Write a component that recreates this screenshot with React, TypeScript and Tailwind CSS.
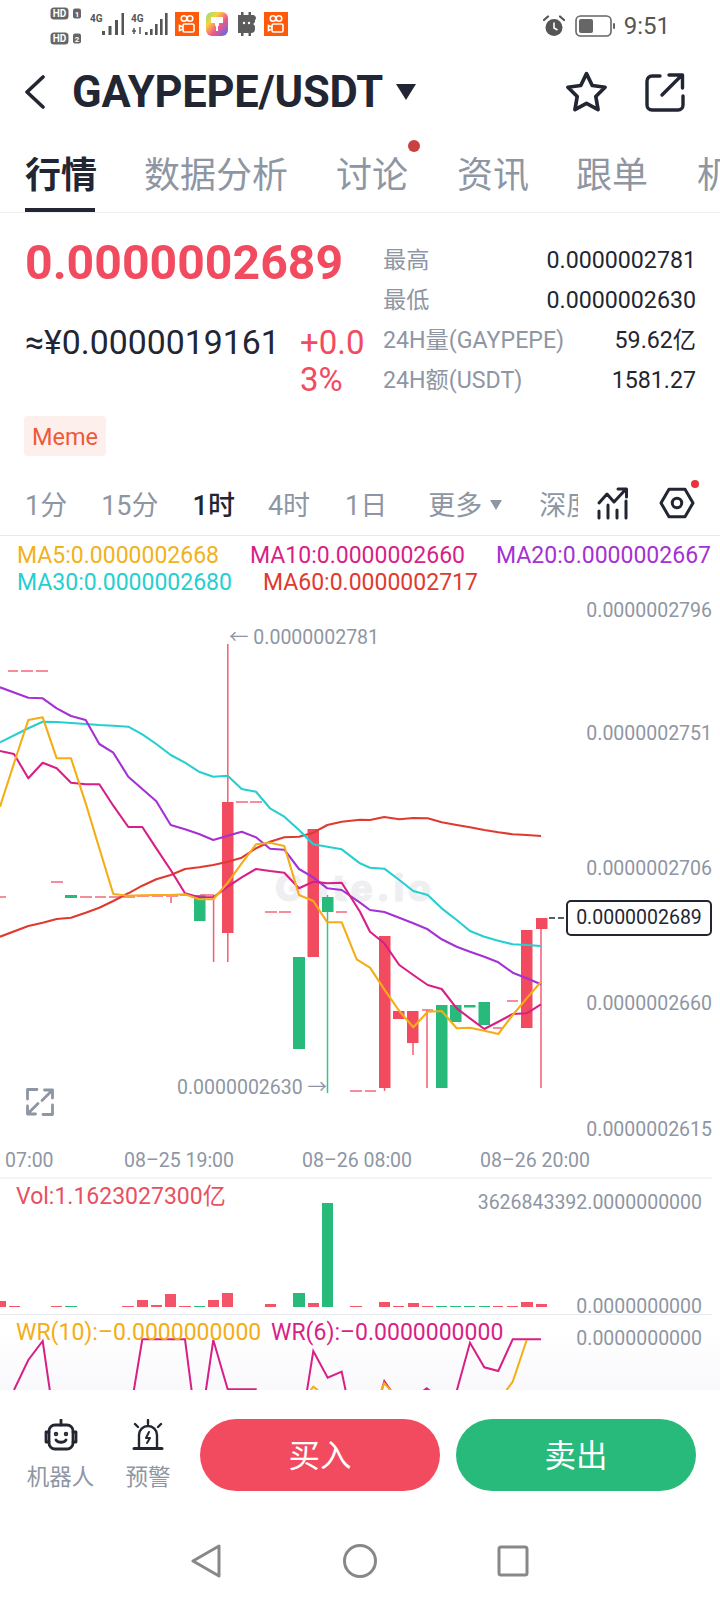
import React from "react";

const zx = (x0: number, y0: number, pts: number[][]) => pts.map(([x, y]) => [x0 + x / 3, y0 + y / 3]);
const toP = (p: number[][]) => p.map(([x, y]) => `${x.toFixed(1)},${y.toFixed(1)}`).join(" ");

const MA20 = [...zx(0, 600, [[0,262],[85,293],[128,295],[170,325],[213,348],[257,360],[298,432],[340,458],[385,530],[427,567],[469,604],[512,675],[555,688],[597,702],[640,720],[683,707],[725,695],[768,712],[810,746],[853,749],[897,807],[940,832],[982,865],[1025,870],[1080,908]]), ...zx(360, 900, [[30,30],[73,36],[118,53],[160,70],[203,88],[245,118],[290,140],[330,155],[373,170],[415,187],[458,218],[500,235],[543,253]])];
const MA30 = [...zx(0, 600, [[0,427],[85,385],[128,365],[170,366],[213,369],[257,372],[298,375],[340,377],[385,380],[427,403],[469,432],[512,465],[555,488],[597,515],[640,530],[683,527],[725,567],[768,575],[810,625],[853,650],[897,690],[940,733],[982,740],[1025,748],[1080,790]]), ...zx(360, 600, [[30,803],[73,806],[118,840],[160,873],[203,885],[245,925],[290,960],[330,993]]), ...zx(360, 900, [[373,110],[415,122],[458,133],[500,135],[543,138]])];
const MA10 = [...zx(0, 600, [[0,453],[42,462],[85,535],[128,488],[170,505],[213,548],[257,553],[298,553],[340,617],[385,681],[427,681],[469,745],[512,810],[555,880],[597,892],[640,892],[683,860],[725,832],[768,807],[810,813],[853,818],[897,865],[940,845],[982,850],[1025,848],[1080,935]]), ...zx(360, 900, [[30,95],[73,130],[118,195],[160,225],[203,255],[245,267],[290,325],[330,355],[373,387],[415,365],[458,342],[500,340],[543,313]])];
const MA5 = [...zx(0, 600, [[0,620],[42,490],[85,360],[128,352],[170,475],[213,475],[257,610],[298,745],[340,882],[385,887],[427,886],[469,885],[512,885],[555,883],[597,898],[640,898],[683,848],[725,790],[768,733],[810,728],[853,738],[897,885],[940,903],[982,967],[1025,967],[1070,1078]]), ...zx(360, 900, [[30,203],[73,268],[118,333],[160,382],[203,335],[245,333],[290,385],[330,383],[373,392],[415,402],[458,345],[500,295],[543,245]])];
const MA60 = [...zx(0, 600, [[0,1010],[85,978],[128,968],[170,957],[213,953],[257,938],[298,923],[340,903],[385,880],[427,857],[469,838],[512,825],[555,807],[597,802],[640,795],[683,785],[725,773],[768,745],[810,725],[853,712],[897,710],[940,698],[982,675],[1025,665],[1080,659]]), ...zx(360, 600, [[30,660],[73,651],[118,658],[160,654],[203,655],[245,667],[290,675],[330,682],[373,690],[415,697],[458,703],[500,705],[543,708]])];

const WR6 = [
  zx(0, 1170, [[42,660],[85,570],[128,513],[155,700]]),
  zx(0, 1170, [[395,700],[427,508],[555,508],[580,700]]),
  zx(0, 1170, [[612,700],[640,510],[683,658],[770,658]]),
  zx(0, 1170, [[915,700],[940,543],[983,623],[1025,605],[1045,700]]),
  zx(360, 1170, [[60,680],[73,633],[105,680]]),
  zx(360, 1170, [[180,670],[200,655],[220,670]]),
  zx(360, 1170, [[280,700],[330,518],[373,592],[415,603],[458,508],[543,508]]),
];
const WR10 = [
  zx(0, 1170, [[925,670],[940,650],[965,670]]),
  zx(360, 1170, [[60,670],[73,640],[100,670]]),
  zx(360, 1170, [[425,680],[458,635],[500,510]]),
];

const RED = "#f24b60";
const GREEN = "#27ba7b";
const bodies: [number, number, number, number, string][] = [
  [65, 12, 895, 898, GREEN], [194, 11.5, 895, 921, GREEN], [222, 11.5, 802, 933, RED], [293, 12, 957, 1049, GREEN],
  [307.5, 11.5, 829, 957, RED], [322, 11.5, 897, 912, GREEN], [379, 11.5, 936, 1088, RED], [393, 11.5, 1011, 1019, RED],
  [407, 11.5, 1011, 1043, RED], [436, 11.5, 1005, 1088, GREEN], [450, 11.5, 1005, 1022, GREEN], [464, 11.5, 1005, 1007.5, GREEN],
  [478.5, 11.5, 1002, 1025, GREEN], [521, 11.5, 930, 1028, RED], [536, 11.5, 918, 929, RED],
];
const wicks: [number, number, number, string][] = [
  [213.6, 895, 962, RED], [227.8, 644, 962, RED], [327.5, 895, 1093, GREEN], [384.5, 1088, 1091, RED], [413, 1043, 1055, RED],
  [427, 1010, 1088, RED], [541, 929, 1088, RED], [171, 897, 903, RED],
];
const dashes: [number, number, number, string][] = [
  [8, 18, 671, RED], [21, 33, 671, RED], [36, 48, 671, RED], [51, 63, 882, RED], [0, 6, 897, RED], [80, 92, 897, RED], [95, 106, 897, RED],
  [109, 120, 897, RED], [123, 135, 897, RED], [137, 149, 896, RED], [152, 163, 896, RED], [166, 178, 896, RED], [180, 191, 895, RED],
  [200, 214, 895, RED], [236, 248, 802, RED], [250, 262, 802, RED], [265, 277, 912, RED], [279, 291, 912, RED], [336, 347, 912, RED],
  [350, 362, 1091, RED], [365, 376, 1091, RED], [422, 433, 1010, RED], [493, 503, 1028, RED], [507, 518, 1001, RED],
];
const vols: [number, number, number, string][] = [
  [0, 6, 1301, RED], [9, 11, 1306, RED], [51, 11, 1306, RED], [65, 12, 1306, GREEN], [122, 12, 1306, RED], [137, 11, 1300, RED],
  [151, 11, 1305, RED], [165, 11, 1294, RED], [179, 12, 1306, RED], [194, 11, 1306, GREEN], [208, 11, 1300, RED], [222, 11, 1293, RED],
  [265, 11, 1304, RED], [293, 12, 1293, GREEN], [308, 11, 1303, RED], [322, 11, 1203, GREEN], [350, 12, 1306, RED], [379, 11, 1302, RED],
  [393, 11, 1306, RED], [408, 11, 1303, RED], [422, 11, 1306, RED], [436, 11, 1306, GREEN], [450, 11, 1306, GREEN], [464, 11, 1306, GREEN],
  [479, 11, 1306, GREEN], [493, 10, 1306, RED], [507, 11, 1306, RED], [521, 12, 1302, RED], [536, 11, 1304, RED],
];

function ChartDrawing() {
  return (
    <svg className="absolute inset-0 w-[720px] h-[854px]" viewBox="0 536 720 854" fill="none">
      <text x="275" y="901" fontFamily="Inter, sans-serif" fontWeight="800" fontSize="37" letterSpacing="4" fill="#efeff1" stroke="#efeff1" strokeWidth="1">Gate.io</text>
      <line x1="0" y1="1178" x2="712" y2="1178" stroke="#e8e9ee" strokeWidth="1" />
      <line x1="0" y1="1314.5" x2="712" y2="1314.5" stroke="#e8e9ee" strokeWidth="1" />
      {dashes.map(([a, b, y, c], i) => <line key={i} x1={a} x2={b} y1={y} y2={y} stroke={c} strokeWidth="1.5" opacity="0.85" />)}
      {wicks.map(([x, a, b, c], i) => <line key={i} x1={x} x2={x} y1={a} y2={b} stroke={c} strokeWidth="1.5" opacity="0.9" />)}
      {bodies.map(([x, w, a, b, c], i) => <rect key={i} x={x} y={a} width={w} height={b - a} fill={c} />)}
      {[[MA60, "#e03a30"], [MA30, "#25cfd0"], [MA20, "#a531d4"], [MA10, "#d81f87"], [MA5, "#f5ad16"]].map(([p, c], i) => (
        <polyline key={i} points={toP(p as number[][])} stroke={c as string} strokeWidth="2.1" strokeLinejoin="round" />
      ))}
      {vols.map(([x, w, y, c], i) => <rect key={i} x={x} y={y} width={w} height={1307 - y} fill={c} opacity={c === RED ? 0.95 : 1} />)}
      {WR6.map((p, i) => <polyline key={i} points={toP(p)} stroke="#d81f87" strokeWidth="2" />)}
      {WR10.map((p, i) => <polyline key={i} points={toP(p)} stroke="#f5ad16" strokeWidth="2" />)}
      <line x1="549" x2="555" y1="918" y2="918" stroke="#222633" strokeWidth="1.5" />
      <line x1="558" x2="564" y1="918" y2="918" stroke="#222633" strokeWidth="1.5" />
      <g stroke="#8e96a3" strokeWidth="2.8" strokeLinecap="round" strokeLinejoin="round">
        <path d="M27.5 1099V1089.5H37" />
        <path d="M52.5 1105V1114.5H43" />
        <path d="M42 1100.5L52.5 1090M44.5 1090H52.5V1098" />
        <path d="M38 1103.5L27.5 1114M35.5 1114H27.5V1106" />
      </g>
    </svg>
  );
}

function HD({ n }: { n: string }) {
  return (
    <svg width="32" height="13" viewBox="0 0 32 13">
      <rect x="0.5" y="0.5" width="18" height="12" rx="3.5" fill="#666" />
      <text x="9.5" y="10" textAnchor="middle" fontFamily="Roboto, sans-serif" fontWeight="700" fontSize="10" fill="#fff">HD</text>
      <rect x="23" y="1.5" width="8" height="10" rx="2" fill="#666" />
      <text x="27" y="10" textAnchor="middle" fontFamily="Roboto, sans-serif" fontWeight="700" fontSize="8" fill="#fff">{n}</text>
    </svg>
  );
}

function Signal({ w, second }: { w: number; second?: boolean }) {
  const heights = second ? [3, 6, 11, 16, 22] : [4, 9, 15, 22];
  const x0 = second ? 14 : 12;
  const step = second ? 5 : 6.5;
  return (
    <svg width={w} height="24" viewBox={`0 0 ${w} 24`}>
      <text x="0" y="10" fontFamily="Roboto, sans-serif" fontWeight="700" fontSize="10" fill="#555">4G</text>
      {second && <path d="M3 16v6M1 19h4M9 15v7" stroke="#555" strokeWidth="1.5" />}
      {heights.map((h, i) => <rect key={i} x={x0 + i * step} y={23 - h} width={second ? 2.6 : 3} height={h} fill="#555" />)}
    </svg>
  );
}

function Kuaishou() {
  return (
    <svg width="24" height="24" viewBox="0 0 24 24">
      <rect width="24" height="24" fill="#ff5a0a" />
      <g fill="none" stroke="#fff" strokeWidth="1.6">
        <circle cx="9" cy="6.5" r="2.8" />
        <circle cx="15" cy="6.5" r="2.8" />
        <rect x="8" y="12" width="11" height="8" rx="1.5" />
        <path d="M8 15l-3.5-1.5v5L8 17" />
      </g>
    </svg>
  );
}

function Brush() {
  return (
    <svg width="22" height="24" viewBox="0 0 22 24">
      <defs>
        <linearGradient id="brushg" x1="0" y1="0" x2="1" y2="1">
          <stop offset="0" stopColor="#7fe08a" />
          <stop offset="0.3" stopColor="#f9d23c" />
          <stop offset="0.6" stopColor="#f0578a" />
          <stop offset="1" stopColor="#4b6cf6" />
        </linearGradient>
      </defs>
      <rect width="22" height="24" rx="6" fill="url(#brushg)" />
      <path d="M5 5h12v6h-4v3h-1v5h-2v-5H9v-3H5z" fill="#fff" />
    </svg>
  );
}

function Chip() {
  return (
    <svg width="22" height="24" viewBox="0 0 22 24">
      <path d="M6 0h2.5v3h5V0H16v3h2a3 3 0 0 1 2 5.2V9c0 1.5-1 2.5-2 3 1 .5 2 1.5 2 3v2a4 4 0 0 1-4 4v3h-2.5v-3h-5v3H6v-3H3V3h3z" fill="#5c5c5c" />
      <circle cx="9" cy="11" r="1.2" fill="#fff" />
      <circle cx="14" cy="11" r="1.2" fill="#fff" />
    </svg>
  );
}

function StatusBar() {
  return (
    <div className="h-[50px] flex items-start">
      <div className="flex flex-col gap-[12px] ml-[50px] mt-[7px] w-[32px]">
        <HD n="1" />
        <HD n="2" />
      </div>
      <div className="flex items-start gap-[7px] ml-[8px] mt-[12px]">
        <Signal w={34} />
        <Signal w={37} second />
        <Kuaishou />
        <Brush />
        <Chip />
        <Kuaishou />
      </div>
      <div className="ml-auto flex items-center mt-[14px] mr-[50px] h-[24px]">
        <svg width="22" height="22" viewBox="0 0 22 22">
          <circle cx="11" cy="12.5" r="8.5" fill="#555" />
          <path d="M11 7.5v5.5l3.5 2" stroke="#fff" strokeWidth="1.6" fill="none" />
          <path d="M1 5l4-3.5M21 5l-4-3.5" stroke="#555" strokeWidth="2.2" strokeLinecap="round" />
        </svg>
        <svg className="ml-[10px]" width="40" height="22" viewBox="0 0 40 22">
          <rect x="1" y="1" width="35" height="20" rx="4.5" fill="none" stroke="#666" strokeWidth="1.6" />
          <rect x="4" y="4" width="14" height="14" rx="2" fill="#666" />
          <rect x="38" y="8" width="2" height="6" rx="1" fill="#666" />
        </svg>
        <span className="ml-[9px] text-[24px] leading-[24px] text-[#555]">9:51</span>
      </div>
    </div>
  );
}

function Header() {
  return (
    <div className="h-[84px] flex items-center text-[#222633]">
      <svg className="ml-[24px]" width="21" height="34" viewBox="0 0 21 34" fill="none">
        <path d="M19 2L3 17l16 15" stroke="#222633" strokeWidth="3.6" strokeLinecap="round" strokeLinejoin="round" />
      </svg>
      <span className="ml-[27px] mt-[2px] text-[43.5px] leading-[50px] font-bold tracking-[-0.2px]">GAYPEPE/USDT</span>
      <svg className="ml-[13px]" width="20" height="16" viewBox="0 0 20 16">
        <path d="M0 0h20L10 16z" fill="#222633" />
      </svg>
      <svg className="ml-auto" width="45" height="44" viewBox="0 0 44 42" fill="none">
        <path d="M22 3l5.6 11.6 12.6 1.8-9.1 9 2.2 12.8L22 32.1l-11.3 6.1 2.2-12.8-9.1-9 12.6-1.8z" stroke="#222633" strokeWidth="3.6" strokeLinejoin="round" />
      </svg>
      <svg className="ml-[36px] mr-[35px]" width="40" height="40" viewBox="0 0 40 40" fill="none" stroke="#222633" strokeWidth="3.4" strokeLinecap="round" strokeLinejoin="round">
        <path d="M15 4H7a5 5 0 0 0-5 5v24a5 5 0 0 0 5 5h26a5 5 0 0 0 5-5v-9" />
        <path d="M17 23L37 3M24 3h13.5v13" />
      </svg>
    </div>
  );
}

function Tabs() {
  return (
    <div className="h-[79px] border-b border-[#eff0f5] flex overflow-hidden text-[36px] leading-[84px] text-[#8e96a3] whitespace-nowrap">
      <div className="ml-[25px] relative font-bold text-[#222633]">
        行情
        <div className="absolute left-0 w-[70px] bottom-0 h-[4px] bg-[#222633]" />
      </div>
      <div className="ml-[47px]">数据分析</div>
      <div className="ml-[48px] relative">
        讨论
        <div className="absolute right-[-12px] top-[6px] w-[12px] h-[12px] rounded-full bg-[#c9403f]" />
      </div>
      <div className="ml-[49px]">资讯</div>
      <div className="ml-[47px]">跟单</div>
      <div className="ml-[49px]">机器人</div>
    </div>
  );
}

const stats = [
  ["最高", "0.0000002781"],
  ["最低", "0.0000002630"],
  ["24H量(GAYPEPE)", "59.62亿"],
  ["24H额(USDT)", "1581.27"],
];

function PriceBlock() {
  return (
    <div className="h-[203px] flex">
      <div className="w-[383px] pl-[25px] pt-[25px] shrink-0">
        <div className="text-[48.2px] leading-[50px] font-bold text-[#f24b60]">0.0000002689</div>
        <div className="mt-[36px] flex">
          <span className="w-[275px] text-[33.8px] leading-[37px] text-[#222633]">≈¥0.0000019161</span>
          <span className="w-[68px] text-[33px] leading-[37px] text-[#f24b60] break-all">+0.03%</span>
        </div>
      </div>
      <div className="w-[313px] pt-[27px]">
        {stats.map(([a, b]) => (
          <div key={a} className="h-[40px] flex items-center justify-between text-[23.2px]">
            <span className="text-[#8e96a3]">{a}</span>
            <span className="text-[#222633]">{b}</span>
          </div>
        ))}
      </div>
    </div>
  );
}

function Intervals() {
  return (
    <div className="mt-[14px] h-[66px] border-b border-[#e8e9ee] flex items-center pl-[25px] text-[27px] text-[#8e96a3] whitespace-nowrap">
      <span className="pt-[8px]">1分</span>
      <span className="pt-[8px] ml-[34px]">15分</span>
      <span className="pt-[8px] ml-[34px] font-medium text-[#222633]">1时</span>
      <span className="pt-[8px] ml-[33px]">4时</span>
      <span className="pt-[8px] ml-[35px]">1日</span>
      <span className="pt-[8px] ml-[41px]">更多</span>
      <svg className="ml-[8px] mt-[4px]" width="12" height="10" viewBox="0 0 12 10"><path d="M0 0h12L6 10z" fill="#8e96a3" /></svg>
      <span className="pt-[8px] ml-[37px] w-[39px] overflow-hidden">深度</span>
      <svg className="ml-[18px]" width="34" height="34" viewBox="0 0 34 34" fill="none" stroke="#222633" strokeWidth="3" strokeLinecap="round" strokeLinejoin="round">
        <path d="M3 17l8-9 7 8L30 3M22 3h8.5v8" />
        <path d="M3 25v7M12 19v13M21 24v8M30 15v17" />
      </svg>
      <div className="relative ml-[29px]">
        <svg width="36" height="32" viewBox="0 0 38 34" fill="none" stroke="#222633" strokeWidth="3.2" strokeLinejoin="round">
          <path d="M10.5 2.5h17L36 17l-8.5 14.5h-17L2 17z" />
          <circle cx="19" cy="17" r="5" />
        </svg>
        <div className="absolute right-[-4px] top-[-7px] w-[8px] h-[8px] rounded-full bg-[#e8343a]" />
      </div>
    </div>
  );
}

function Chart() {
  const axis = "absolute text-[19.5px] leading-[26px] text-[#8e96a3] whitespace-nowrap";
  return (
    <div className="relative h-[854px] overflow-hidden">
      <div className="absolute left-0 right-0 bottom-0 h-[60px] bg-linear-to-b from-white to-[#f9f9fc]" />
      <ChartDrawing />
      <div className="relative pl-[17px] pt-[6px] text-[23px] leading-[27px] whitespace-nowrap">
        <div className="flex gap-x-[31px]">
          <span className="text-[#f2b21c]">MA5:0.0000002668</span>
          <span className="text-[#d81f87]">MA10:0.0000002660</span>
          <span className="text-[#a531d4]">MA20:0.0000002667</span>
        </div>
        <div className="flex gap-x-[31px]">
          <span className="text-[#25cfd0]">MA30:0.0000002680</span>
          <span className="text-[#e03a30]">MA60:0.0000002717</span>
        </div>
      </div>
      <span className={`${axis} right-[8px] top-[62px]`}>0.0000002796</span>
      <span className={`${axis} right-[8px] top-[185px]`}>0.0000002751</span>
      <span className={`${axis} right-[8px] top-[320px]`}>0.0000002706</span>
      <span className={`${axis} right-[8px] top-[455px]`}>0.0000002660</span>
      <span className={`${axis} right-[8px] top-[581px]`}>0.0000002615</span>
      <span className={`${axis} left-[229px] top-[89px]`}>← 0.0000002781</span>
      <span className={`${axis} left-[177px] top-[539px]`}>0.0000002630 →</span>
      <span className={`${axis} left-[5px] top-[612px]`}>07:00</span>
      <span className={`${axis} left-[124px] top-[612px]`}>08–25 19:00</span>
      <span className={`${axis} left-[302px] top-[612px]`}>08–26 08:00</span>
      <span className={`${axis} left-[480px] top-[612px]`}>08–26 20:00</span>
      <div className="absolute left-[566px] top-[364px] w-[146px] h-[36px] border-2 border-[#222633] rounded-[5px] bg-white flex items-center justify-center text-[19.5px] text-[#222633]">
        0.0000002689
      </div>
      <span className="absolute left-[16px] top-[648px] text-[23px] leading-[26px] text-[#e8515f]">Vol:1.1623027300亿</span>
      <span className={`${axis} right-[18px] top-[654px]`}>3626843392.0000000000</span>
      <span className={`${axis} right-[18px] top-[758px]`}>0.0000000000</span>
      <span className="absolute left-[16px] top-[784px] text-[23px] leading-[26px] text-[#f5ad16] whitespace-nowrap">WR(10):–0.0000000000</span>
      <span className="absolute left-[271px] top-[784px] text-[23px] leading-[26px] text-[#d81f87] whitespace-nowrap">WR(6):–0.0000000000</span>
      <span className={`${axis} right-[18px] top-[790px]`}>0.0000000000</span>
    </div>
  );
}

function BottomBar() {
  const label = "text-[22.5px] leading-[30px] text-[#8e96a3] whitespace-nowrap";
  return (
    <div className="h-[210px] bg-white">
      <div className="pt-[29px] flex pl-[27px]">
        <div className="flex flex-col items-center w-[67px]">
          <svg width="34" height="32" viewBox="0 0 34 32" fill="none" stroke="#222633" strokeWidth="2.8" strokeLinejoin="round" strokeLinecap="round">
            <path d="M17 1v5" />
            <rect x="5" y="6" width="24" height="24" rx="6" />
            <path d="M5 13H2v10h3M29 13h3v10h-3" />
            <path d="M12 21c2 3 8 3 10 0" />
            <circle cx="12" cy="15" r="0.8" fill="#222633" />
            <circle cx="22" cy="15" r="0.8" fill="#222633" />
          </svg>
          <span className={`${label} mt-[11px]`}>机器人</span>
        </div>
        <div className="flex flex-col items-center w-[46px] ml-[31px]">
          <svg width="32" height="32" viewBox="0 0 32 32" fill="none" stroke="#222633" strokeWidth="2.4" strokeLinecap="round" strokeLinejoin="round">
            <path d="M16 1v4M3 5l3 3M29 5l-3 3" />
            <path d="M7 28V16a9 9 0 0 1 18 0v12" />
            <path d="M2 29.5h28" strokeWidth="3" />
            <path d="M17 13l-3 6h4l-3 5" strokeWidth="2" />
          </svg>
          <span className={`${label} mt-[11px]`}>预警</span>
        </div>
        <div className="ml-[29px] w-[240px] h-[72px] pt-[3px] rounded-full bg-[#f24b60] flex items-center justify-center text-[31.5px] text-white">买入</div>
        <div className="ml-[16px] w-[240px] h-[72px] pt-[3px] rounded-full bg-[#27ba7b] flex items-center justify-center text-[31.5px] text-white">卖出</div>
      </div>
      <div className="mt-[52px] flex items-center pl-[191px]">
        <svg width="30" height="34" viewBox="0 0 30 34" fill="none" stroke="#888" strokeWidth="3" strokeLinejoin="round">
          <path d="M28 2v30L2 17z" />
        </svg>
        <svg className="ml-[122px]" width="34" height="34" viewBox="0 0 34 34" fill="none" stroke="#888" strokeWidth="3">
          <circle cx="17" cy="17" r="15.5" />
        </svg>
        <svg className="ml-[120px]" width="32" height="32" viewBox="0 0 32 32" fill="none" stroke="#888" strokeWidth="3" strokeLinejoin="round">
          <rect x="2" y="2" width="28" height="28" rx="2" />
        </svg>
      </div>
    </div>
  );
}

export default function App() {
  return (
    <div className="w-[720px] h-[1600px] overflow-hidden bg-white font-[Roboto,'Noto_Sans_CJK_SC',sans-serif]">
      <StatusBar />
      <Header />
      <Tabs />
      <PriceBlock />
      <div className="ml-[24px] w-[82px] h-[40px] rounded-[4px] bg-[#fdf0ec] flex items-center justify-center pt-[3px] text-[23.5px] text-[#f0583a]">Meme</div>
      <Intervals />
      <Chart />
      <BottomBar />
    </div>
  );
}
